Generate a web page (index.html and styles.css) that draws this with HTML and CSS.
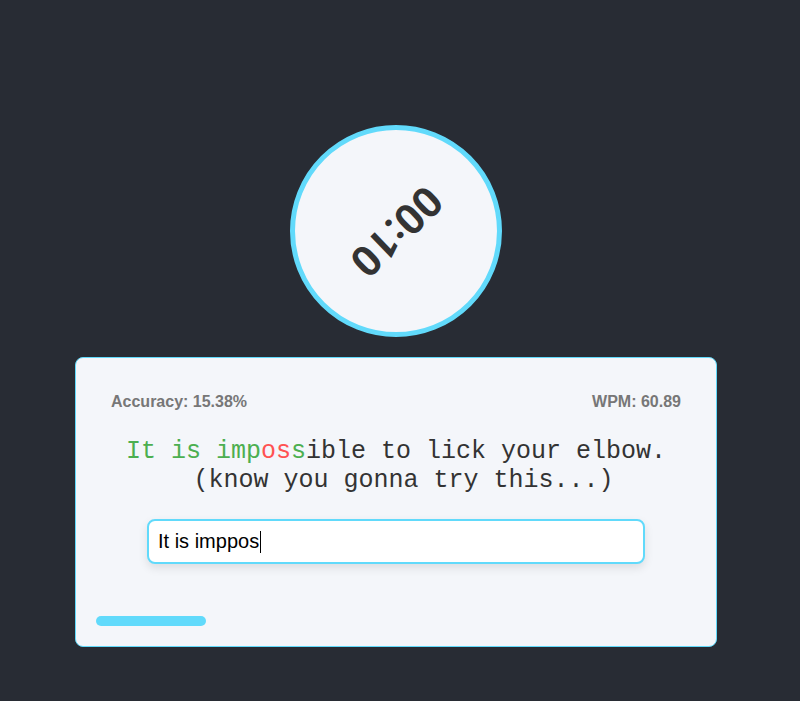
FILE: index.html
```html
<!DOCTYPE html>
<html lang="en">
<head>
<meta charset="utf-8">
<title>Typing Test</title>
<link rel="stylesheet" href="styles.css">
</head>
<body>
<div class="app">
  <div class="timer">
    <span class="timer-text">00:10</span>
  </div>
  <div class="card">
    <div class="stats">
      <span class="stat">Accuracy: 15.38%</span>
      <span class="stat">WPM: 60.89</span>
    </div>
    <p class="sentence"><span class="ok">It is imp</span><span class="bad">os</span><span class="ok">s</span>ible to lick your elbow.<br>&nbsp;(know you gonna try this...)</p>
    <div class="field">
      <div class="input">It is imppos<span class="caret"></span></div>
    </div>
    <div class="progress" style="width: 110px"></div>
  </div>
</div>
</body>
</html>
```

FILE: styles.css
```css
html, body {
  margin: 0;
  padding: 0;
  background: #282c34;
  height: 100%;
}

.app {
  width: 792px;
  padding-top: 125px;
  display: flex;
  flex-direction: column;
  align-items: center;
  font-family: "Liberation Sans", Arial, sans-serif;
}

.timer {
  width: 212px;
  height: 212px;
  box-sizing: border-box;
  border: 5px solid #61dafb;
  border-radius: 50%;
  background: #f4f6fa;
  display: flex;
  align-items: center;
  justify-content: center;
}

.timer-text {
  font-family: Roboto, "Liberation Sans", sans-serif;
  font-weight: 700;
  font-size: 42px;
  color: #333;
  transform: rotate(136deg);
  line-height: 1;
}

.card {
  margin-top: 20px;
  width: 642px;
  box-sizing: border-box;
  border: 1px solid #61dafb;
  border-radius: 8px;
  background: #f4f6fa;
  padding: 20px;
}

.stats {
  display: flex;
  justify-content: space-between;
  padding: 15px 15px 0;
  font-size: 16px;
  font-weight: bold;
  color: #777;
}

.sentence {
  margin: 26px 0 0;
  text-align: center;
  font-family: "Courier New", "Nimbus Mono PS", "FreeMono", "Liberation Mono", monospace;
  font-size: 25px;
  line-height: 29px;
  color: #333;
  padding: 0 10px;
}

.ok { color: #4caf50; }
.bad { color: #ff5252; }

.field {
  display: flex;
  justify-content: center;
  margin-top: 24px;
}

.input {
  width: 498px;
  height: 45px;
  box-sizing: border-box;
  border: 2px solid #61dafb;
  border-radius: 8px;
  background: #fff;
  box-shadow: 0 4px 10px rgba(0, 0, 0, 0.1);
  display: flex;
  align-items: center;
  padding: 0 9px;
  font-size: 20px;
  color: #000;
}

.caret {
  display: inline-block;
  width: 1px;
  height: 22px;
  background: #000;
  margin-left: 1px;
}

.progress {
  margin-top: 52px;
  height: 10px;
  border-radius: 5px;
  background: #61dafb;
}
```
